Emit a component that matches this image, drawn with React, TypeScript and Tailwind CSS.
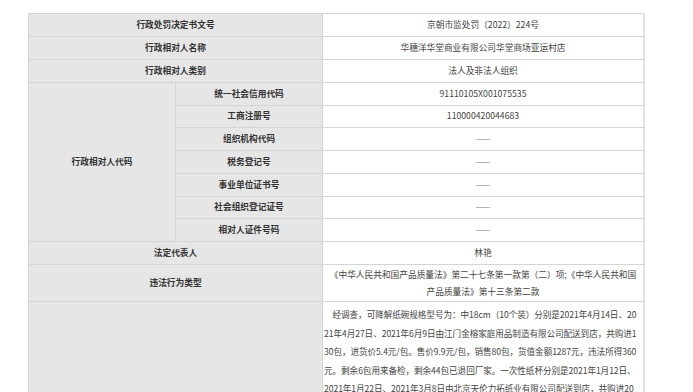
import React from 'react';

const font = { fontFamily: '"Noto Sans CJK SC", "Noto Sans", sans-serif' };

const labelCls =
  'flex items-center justify-center border-r border-b border-[#d5d5d5] bg-[#e6e6e6] font-bold text-[#333] col-span-2';
const subLabelCls =
  'flex items-center justify-center border-r border-b border-[#d5d5d5] bg-[#e6e6e6] font-bold text-[#333]';
const valueCls =
  'flex items-center justify-center border-r-2 border-b border-r-[#e2e2e2] border-b-[#d5d5d5] bg-white text-[#444] text-center';

const codeRows = [
  { label: '统一社会信用代码', value: '91110105X001075535' },
  { label: '工商注册号', value: '110000420044683' },
  { label: '组织机构代码', value: '——' },
  { label: '税务登记号', value: '——' },
  { label: '事业单位证书号', value: '——' },
  { label: '社会组织登记证号', value: '——' },
  { label: '相对人证件号码', value: '——' },
];

// lines as they wrap in the source page
const facts = [
  '经调查，可降解纸碗规格型号为：中18cm（10个装）分别是2021年4月14日、20',
  '21年4月27日、2021年6月9日由江门金榕家庭用品制造有限公司配送到店，共购进1',
  '30包，进货价5.4元/包。售价9.9元/包，销售80包，货值金额1287元，违法所得360',
  '元。剩余6包用来备检，剩余44包已退回厂家。一次性纸杯分别是2021年1月12日、',
  '2021年1月22日、2021年3月8日由北京天伦力拓纸业有限公司配送到店，共购进20',
];

export default function App() {
  return (
    <div className="min-h-screen bg-white pt-[13px] pl-[28px]" style={font}>
      <div className="grid w-[616px] grid-cols-[147px_147px_322px] grid-rows-[23px_23px_23px_23px_22px_23px_23px_23px_22px_23px_23px_37px_auto] border-t border-l border-[#d5d5d5] text-[8.7px] leading-none">
        <div className={labelCls}>行政处罚决定书文号</div>
        <div className={valueCls}>京朝市监处罚〔2022〕224号</div>

        <div className={labelCls}>行政相对人名称</div>
        <div className={valueCls}>华穗洋华堂商业有限公司华堂商场亚运村店</div>

        <div className={labelCls}>行政相对人类别</div>
        <div className={valueCls}>法人及非法人组织</div>

        <div className="row-span-7 flex items-center justify-center border-r border-b border-[#d5d5d5] bg-[#e6e6e6] font-bold text-[#333]">
          行政相对人代码
        </div>
        {codeRows.map((r, i) => (
          <React.Fragment key={i}>
            <div className={`${subLabelCls} col-start-2`}>{r.label}</div>
            <div className={valueCls}>
              <span className={r.value === '——' ? 'text-[#777]' : ''}>{r.value}</span>
            </div>
          </React.Fragment>
        ))}

        <div className={labelCls}>法定代表人</div>
        <div className={valueCls}>林艳</div>

        <div className={labelCls}>违法行为类型</div>
        <div className={`${valueCls} px-[3px] leading-[17.4px]`}>
          《中华人民共和国产品质量法》第二十七条第一款第（二）项;《中华人民共和国产品质量法》第十三条第二款
        </div>

        <div className="col-span-2 flex min-h-[420px] items-center justify-center border-r border-b border-[#d5d5d5] bg-[#e6e6e6] font-bold text-[#333]"></div>
        <div className="overflow-hidden border-r-2 border-b border-r-[#e2e2e2] border-b-[#d5d5d5] bg-white px-[1px] pt-[3px] text-[#444]">
          <p className="whitespace-nowrap text-[8.6px] tracking-[-0.06px] leading-[18.6px]">
            {facts.map((line, i) => (
              <span key={i} className={i === 0 ? 'block pl-[8.5px]' : 'block'}>
                {line}
              </span>
            ))}
          </p>
        </div>
      </div>
    </div>
  );
}
